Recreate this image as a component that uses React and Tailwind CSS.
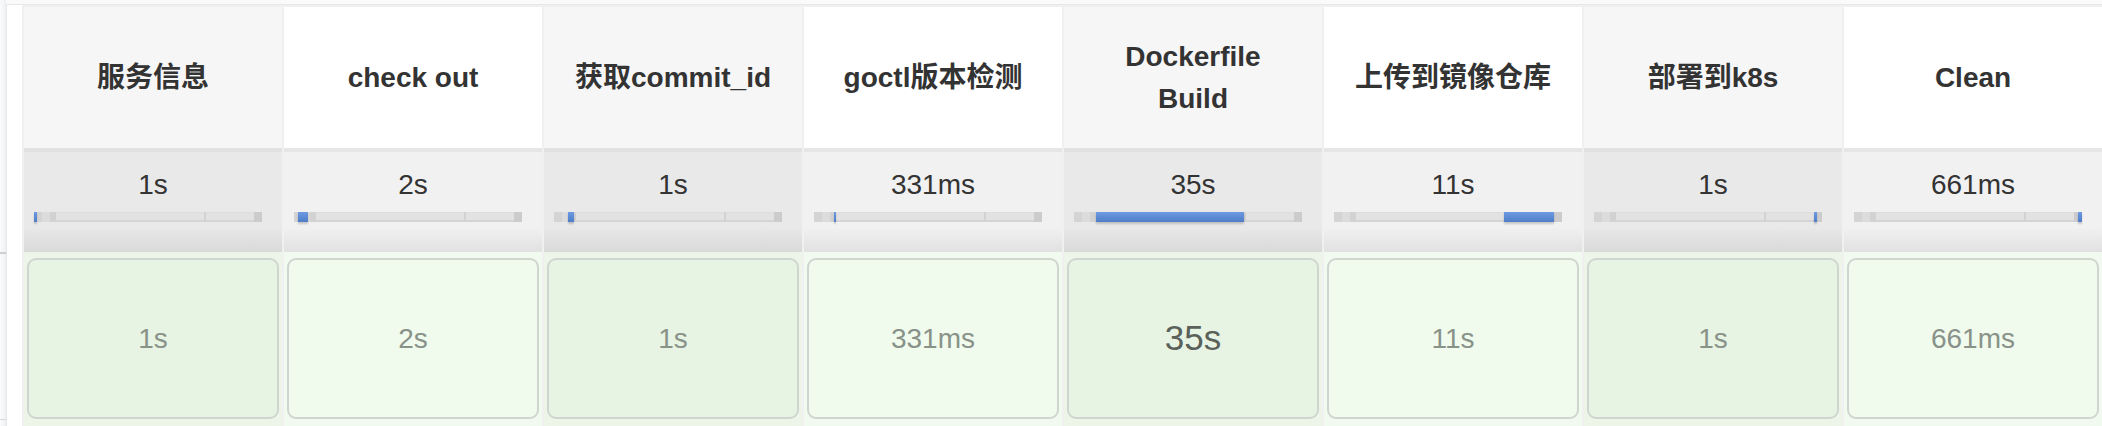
const stages = [
  { name: '服务信息', time: '1s', left: 0, width: 3 },
  { name: 'check out', time: '2s', left: 4, width: 10 },
  { name: '获取commit_id', time: '1s', left: 14, width: 6 },
  { name: 'goctl版本检测', time: '331ms', left: 20, width: 2 },
  { name: 'Dockerfile Build', time: '35s', left: 22, width: 148, big: true },
  { name: '上传到镜像仓库', time: '11s', left: 170, width: 50 },
  { name: '部署到k8s', time: '1s', left: 220, width: 3 },
  { name: 'Clean', time: '661ms', left: 224, width: 4 },
];

function Bar({ left, width }) {
  return (
    <div className="relative mt-[6px] ml-[10px] h-[10px] w-[228px] bg-gradient-to-b from-[#dedede] to-[#d3d3d3]">
      {/* blurred marks of the other stages */}
      <div className="absolute inset-0 flex blur-[0.6px]">
        <div className="w-[8px] bg-[#d4d4d4]" />
        <div className="w-[8px] bg-[#dcdcdc]" />
        <div className="w-[6px] bg-[#d2d2d2]" />
        <div className="my-[1px] mb-[2px] flex-1 bg-[#e2e2e2]" />
        <div className="w-[2px] bg-[#d2d2d2]" />
        <div className="my-[1px] mb-[2px] w-[48px] bg-[#e2e2e2]" />
        <div className="w-[8px] bg-[#cccccc]" />
      </div>
      <div
        className="absolute top-0 h-full bg-gradient-to-b from-[#6d9ae0] to-[#4f7dc8] shadow-[0_2px_2px_rgba(0,0,0,0.18)]"
        style={{ left, width }}
      />
    </div>
  );
}

function Stage({ stage, odd }) {
  return (
    <div className="flex w-[260px] flex-col border-l-2 border-t-2 border-[#f0f0f0]">
      <div
        className={
          odd
            ? 'flex h-[141px] items-center justify-center bg-[#f6f6f6] px-[28px] text-center text-[28px] leading-[42px] font-bold text-[#333]'
            : 'flex h-[141px] items-center justify-center bg-white px-[28px] text-center text-[28px] leading-[42px] font-bold text-[#333]'
        }
      >
        {stage.name}
      </div>
      <div
        className={
          odd
            ? 'flex h-[104px] flex-col border-t-4 border-[#e2e2e2] bg-gradient-to-b from-[#e9e9e9] from-75% to-[#d9d9d9] pt-[12px]'
            : 'flex h-[104px] flex-col border-t-4 border-[#e6e6e6] bg-gradient-to-b from-[#f1f1f1] from-75% to-[#e1e1e1] pt-[12px]'
        }
      >
        <div className="text-center text-[28px] leading-[42px] text-[#333]">{stage.time}</div>
        <Bar left={stage.left} width={stage.width} />
      </div>
      <div className={odd ? 'flex-1 bg-[#ecf5e8] px-[3px] pt-[6px]' : 'flex-1 bg-[#f1faee] px-[3px] pt-[6px]'}>
        <div
          className={
            odd
              ? 'flex h-[161px] items-center justify-center rounded-[9px] border-2 border-[#cfd6cf] bg-[#e8f4e3]'
              : 'flex h-[161px] items-center justify-center rounded-[9px] border-2 border-[#cfd6cf] bg-[#f0fbed]'
          }
        >
          {stage.big ? (
            <span className="text-[35px] text-[#59615a]">{stage.time}</span>
          ) : (
            <span className="text-[28px] text-[#899289]">{stage.time}</span>
          )}
        </div>
      </div>
    </div>
  );
}

export default function App() {
  return (
    <div className="flex h-[426px] w-[2102px] overflow-hidden bg-[#fafafa] font-['Liberation_Sans','Noto_Sans_CJK_SC',sans-serif]">
      <div className="flex w-[6px] flex-col bg-gradient-to-r from-[#fbfbfb] to-[#eef0f2]">
        <div className="h-[252px]" />
        <div className="h-[2px] bg-[#cfcfcf]" />
        <div className="h-[165px]" />
        <div className="h-[1px] bg-[#dadada]" />
      </div>
      <div className="mt-[4px] flex flex-1 border-l border-t border-[#e4e8eb]">
        <div className="w-[15px] bg-white" />
        {stages.map((s, i) => (
          <Stage key={s.name} stage={s} odd={i % 2 === 0} />
        ))}
      </div>
    </div>
  );
}
